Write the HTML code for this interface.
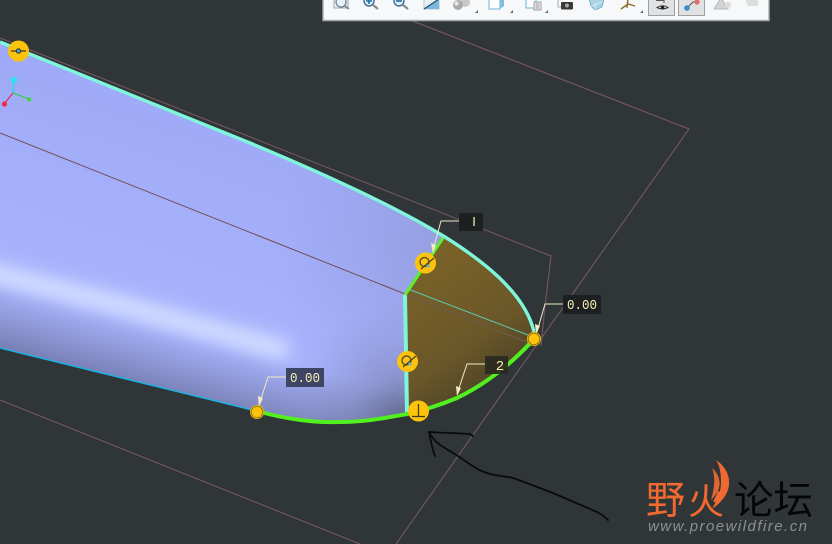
<!DOCTYPE html>
<html>
<head>
<meta charset="utf-8">
<style>
html,body{margin:0;padding:0;background:#303637;}
#p{position:relative;width:832px;height:544px;overflow:hidden;background:#303637;}
svg{position:absolute;left:0;top:0;}
.lb{font-family:"Liberation Mono","DejaVu Sans Mono",monospace;fill:#f6efb4;font-size:14px;}
</style>
</head>
<body>
<div id="p">
<svg width="832" height="544" viewBox="0 0 832 544">
<defs>
<linearGradient id="bg" gradientUnits="userSpaceOnUse" x1="170" y1="90" x2="90" y2="340">
<stop offset="0" stop-color="#9ea9f7"/>
<stop offset="0.45" stop-color="#a4affa"/>
<stop offset="1" stop-color="#a9b5fe"/>
</linearGradient>
<linearGradient id="shade" gradientUnits="userSpaceOnUse" x1="240" y1="305" x2="212" y2="408">
<stop offset="0" stop-color="#5f6690" stop-opacity="0"/>
<stop offset="0.4" stop-color="#5f6690" stop-opacity="0"/>
<stop offset="1" stop-color="#5f6690" stop-opacity="0.7"/>
</linearGradient>
<radialGradient id="corner" gradientUnits="userSpaceOnUse" cx="405" cy="425" r="125">
<stop offset="0" stop-color="#4c5270" stop-opacity="0.85"/>
<stop offset="0.4" stop-color="#6a7198" stop-opacity="0.42"/>
<stop offset="1" stop-color="#8a92c8" stop-opacity="0"/>
</radialGradient>
<radialGradient id="top" gradientUnits="userSpaceOnUse" cx="445" cy="255" r="170">
<stop offset="0" stop-color="#8a94c8" stop-opacity="0.55"/>
<stop offset="1" stop-color="#8a94d8" stop-opacity="0"/>
</radialGradient>
<linearGradient id="br" gradientUnits="userSpaceOnUse" x1="415" y1="250" x2="520" y2="400">
<stop offset="0" stop-color="#7c6428"/>
<stop offset="0.6" stop-color="#6a5628"/>
<stop offset="1" stop-color="#3e3a2a"/>
</linearGradient>
<filter id="b8" x="-20%" y="-80%" width="140%" height="260%"><feGaussianBlur stdDeviation="8"/></filter>
<clipPath id="surf"><path d="M0,42 L250,143 C310,168 390,203 445,237 L405,294 L407,414 C385,418 365,422 340,422 C315,423 285,419 257,411 L0,348 Z"/></clipPath>
</defs>

<!-- plane lines -->
<g fill="none" stroke="#7b5a66" stroke-width="1">
<path d="M410,20 L689,129 L396,544"/>
<path d="M0,400 L360,544"/>
<path d="M0,38 L551,256 L545,306 L541,346"/>
</g>

<!-- blue surface -->
<path d="M0,42 L250,143 C310,168 390,203 445,237 L405,294 L407,414 C385,418 365,422 340,422 C315,423 285,419 257,411 L0,348 Z" fill="url(#bg)"/>
<g clip-path="url(#surf)">
<rect x="200" y="60" width="260" height="380" fill="url(#top)"/>
<path d="M-20,270 L120,305 L280,349" stroke="#d2deff" stroke-width="20" stroke-linecap="round" fill="none" filter="url(#b8)"/>
<rect x="0" y="250" width="420" height="180" fill="url(#shade)"/>
<rect x="270" y="290" width="150" height="140" fill="url(#corner)"/>
</g>
<!-- brown patch -->
<path d="M445,237 C480,259 525,292 534,339 C515,360 490,382 457,398 C440,405 425,410 407,414 L405,294 Z" fill="url(#br)"/>

<!-- centre lines -->
<path d="M0,133 L405,294" stroke="#724c52" stroke-width="1" fill="none"/>
<path d="M405,294 L534,345" stroke="#6f5a50" stroke-width="1" fill="none"/>
<path d="M408,289 L528,335" stroke="#5fc4b0" stroke-width="1" fill="none"/>

<!-- edges -->
<path d="M0,42 L250,143 C310,168 390,203 445,237 C480,259 525,292 534,332" fill="none" stroke="#7ff5dc" stroke-width="3.4"/>
<path d="M405,295 L407,412" fill="none" stroke="#7ff5dc" stroke-width="4"/>
<path d="M0,348 L252,410" fill="none" stroke="#16b4e6" stroke-width="1.4"/>
<path d="M443,238 L425,265 L405,295" fill="none" stroke="#5af02a" stroke-width="3"/>
<path d="M257,411 C285,419 315,423 340,422 C365,422 385,418 407,414 C425,410 440,405 457,398 C490,382 515,360 534,339" fill="none" stroke="#52f01e" stroke-width="4"/>

<!-- triad -->
<path d="M13,93 L14,80" stroke="#20d8f0" stroke-width="1.4"/>
<path d="M13,93 L4,104" stroke="#e83040" stroke-width="1.2"/>
<path d="M13,93 L29,99" stroke="#30d040" stroke-width="1.2"/>
<circle cx="14" cy="80" r="3" fill="#25e5f5"/>
<circle cx="4.5" cy="104" r="2.6" fill="#ee2a48"/>
<circle cx="29" cy="99.5" r="2.1" fill="#38dc30"/>

<!-- leaders -->
<g fill="none" stroke="#f0ebc0" stroke-width="1">
<path d="M459,221 L441,221 L433,250"/>
<path d="M563,304 L545,304 L537,332"/>
<path d="M485,364 L467,364 L457,394"/>
<path d="M286,377 L268,377 L259,405"/>
</g>
<path d="M431,243 L436,245 L433,254 Z" fill="#f0ebc0"/>
<path d="M535,324 L540,326 L536,334 Z" fill="#f0ebc0"/>
<path d="M456,386 L461,388 L457,396 Z" fill="#f0ebc0"/>
<path d="M258,396 L263,398 L259,407 Z" fill="#f0ebc0"/>

<!-- labels -->
<rect x="459" y="213" width="24" height="18" fill="#1c2020"/>
<text x="474" y="226" style="font-family:'Liberation Sans',sans-serif;font-size:13px;fill:#f6efb4" text-anchor="middle">I</text>
<rect x="563" y="295" width="38" height="19" fill="#1c2020"/>
<text x="567" y="309" class="lb" textLength="30" lengthAdjust="spacingAndGlyphs">0.00</text>
<rect x="485" y="356" width="23" height="18" fill="#2a2820" fill-opacity="0.92"/>
<text x="500" y="370" class="lb" text-anchor="middle">2</text>
<rect x="286" y="368" width="38" height="19" fill="#3f4565"/>
<text x="290" y="382" class="lb" textLength="30" lengthAdjust="spacingAndGlyphs">0.00</text>

<!-- handles -->
<circle cx="18.5" cy="51" r="10.5" fill="#fdc30a"/>
<path d="M11,51 H26" stroke="#33332a" stroke-width="1.2"/>
<circle cx="18.5" cy="51" r="2.2" fill="#4fa0b0" stroke="#24333a" stroke-width="1"/>

<circle cx="425.5" cy="263" r="10.5" fill="#fdc30a"/>
<circle cx="424.5" cy="262" r="4.5" fill="none" stroke="#44402a" stroke-width="1.2"/>
<path d="M421,269 L434,258" stroke="#44402a" stroke-width="1.2"/>
<circle cx="428" cy="266" r="1.6" fill="#5fb8d8"/>

<circle cx="407.5" cy="361.5" r="10.5" fill="#fdc30a"/>
<circle cx="406.5" cy="360.5" r="4.5" fill="none" stroke="#44402a" stroke-width="1.2"/>
<path d="M403,367 L416,356" stroke="#44402a" stroke-width="1.2"/>
<circle cx="410" cy="364" r="1.6" fill="#5fb8d8"/>

<circle cx="418.5" cy="411" r="10.5" fill="#fdc30a"/>
<path d="M418.5,404 V416 M412,416.5 H425" stroke="#3a3820" stroke-width="1.2" fill="none"/>

<circle cx="534" cy="339" r="7" fill="#fdc30a"/>
<circle cx="534" cy="339" r="5.8" fill="none" stroke="#8c7420" stroke-width="1"/>
<circle cx="257" cy="412" r="7" fill="#fdc30a"/>
<circle cx="257" cy="412" r="5.8" fill="none" stroke="#8c7420" stroke-width="1"/>

<!-- hand-drawn arrow -->
<g fill="none" stroke="#0a0a0a" stroke-width="1.8" stroke-linecap="round" stroke-linejoin="round">
<path d="M473,436 L470,434 C457,433 443,433 429,432 C431,441 432,449 435,456"/>
<path d="M429,432 C432,438 436,442 440,445 L458,456 C468,463 477,470 487,473 C495,476 505,476 513,478 C527,483 540,488 553,493 L597,512 C601,514 605,517 608,520"/>
</g>

<!-- toolbar -->
<rect x="323" y="0" width="446" height="20.5" fill="#f6f8fa"/>
<path d="M323,0 V20.5 H769 V0" fill="none" stroke="#a8abae" stroke-width="1.4"/>

<path d="M334,0 V8 H348 V0" fill="#eef3f8" stroke="#9aa6b0" stroke-width="1"/>
<circle cx="341" cy="2" r="5" fill="#e8f1fa" stroke="#5f7f98" stroke-width="1.2"/>
<path d="M345,6 L349,9" stroke="#8a8a8a" stroke-width="2"/>
<circle cx="369" cy="1" r="5" fill="#ddeefa" stroke="#3f6e95" stroke-width="1.4"/>
<path d="M366,1 H372 M369,-2 V4" stroke="#1f6ea8" stroke-width="1.6"/>
<path d="M373,5 L378,9" stroke="#8a8a8a" stroke-width="2.2"/>
<circle cx="399" cy="1" r="5" fill="#ddeefa" stroke="#3f6e95" stroke-width="1.4"/>
<path d="M396,1 H402" stroke="#1f6ea8" stroke-width="1.6"/>
<path d="M403,5 L408,9" stroke="#8a8a8a" stroke-width="2.2"/>
<rect x="424" y="-1" width="15" height="10" fill="#e8f0f5" stroke="#b0bac2" stroke-width="0.8"/>
<path d="M424,9 L439,-1 V9 Z" fill="#7ab8da"/>
<path d="M424,9 L439,-1" stroke="#1c4e72" stroke-width="1.2"/>
<circle cx="465" cy="2" r="5" fill="#c8c8c8"/>
<circle cx="458" cy="5" r="5" fill="#aaaaaa"/>
<circle cx="456.5" cy="3.5" r="2.2" fill="#e6e6e6"/>
<path d="M475,13 h3 v-3 z M510,13 h3 v-3 z M545,13 h3 v-3 z M640,13 h3 v-3 z" fill="#666"/>
<rect x="489" y="-1" width="11" height="10" fill="#fbfdff" stroke="#6fb2d6" stroke-width="1"/>
<path d="M500,-1 L504,-3 V6 L500,9 Z" fill="#7fc0e0"/>
<rect x="526" y="-1" width="10" height="9" fill="#fbfdff" stroke="#6fb2d6" stroke-width="1"/>
<rect x="534" y="2" width="7" height="8" fill="#f2f2f2" stroke="#888" stroke-width="0.8"/>
<path d="M535.5,4 h4 M535.5,6 h4 M535.5,8 h4" stroke="#777" stroke-width="0.7"/>
<path d="M558,0 V7 H561" fill="none" stroke="#999" stroke-width="0.8"/>
<rect x="561" y="2" width="12" height="7.5" rx="1" fill="#3a3a3a"/>
<circle cx="567" cy="5.5" r="2.5" fill="#a8a8a8" stroke="#222" stroke-width="0.7"/>
<path d="M589,-1 L604,-1 L602,7 L595,10 L591,6 Z" fill="#a9d4e4" stroke="#6aa8c4" stroke-width="0.8"/>
<path d="M591,6 L602,2 M595,10 L596,3" stroke="#d8eef6" stroke-width="0.8"/>
<path d="M628,-2 L627,8 M621,9 L628,4 L635,6" fill="none" stroke="#8a6a24" stroke-width="1.4"/>
<rect x="648.5" y="-2" width="26" height="17.5" fill="#e0e1e3" stroke="#9da0a2" stroke-width="1"/>
<rect x="678.5" y="-2" width="26" height="17.5" fill="#e0e1e3" stroke="#9da0a2" stroke-width="1"/>
<path d="M656,0.5 H664 M664,-1 V3" stroke="#555" stroke-width="1" fill="none"/>
<path d="M657,7.5 Q662.5,4 668,7.5 Q662.5,10.5 657,7.5 Z" fill="#eee" stroke="#333" stroke-width="1"/>
<circle cx="662.5" cy="7.5" r="1.8" fill="#222"/>
<path d="M687,8 L693,2 L697,2" stroke="#555" stroke-width="1" fill="none"/>
<circle cx="687" cy="8" r="2.8" fill="#3a8cc0"/>
<circle cx="697" cy="2" r="2.6" fill="#e56a6a"/>
<path d="M714,9 L721,-2 L728,9 Z" fill="#d2d4d5" stroke="#b4b6b8" stroke-width="1"/>
<circle cx="728" cy="5" r="3" fill="#dcdcdc"/>
<path d="M745,-1 H758 V6 H748 Z" fill="#dcdddd"/>

<!-- watermark -->
<path d="M716,460 C725,466 730,475 729,485 C728,494 722,502 712,509 C717,500 721,492 721,482 C721,474 720,466 716,460 Z" fill="#ef6a32"/>
<path d="M712,468 C718,473 721,481 719,488 C718,492 715,496 711,500 C714,490 716,478 712,468 Z" fill="#e0652f"/>
<text x="646" y="514" font-family="'Noto Sans CJK SC','WenQuanYi Zen Hei',sans-serif" font-size="39" fill="#f26a30">野</text>
<text x="688" y="514" font-family="'Noto Sans CJK SC','WenQuanYi Zen Hei',sans-serif" font-size="36" fill="#f26a30">火</text>
<text x="734" y="514" font-family="'Noto Sans CJK SC','WenQuanYi Zen Hei',sans-serif" font-size="39" fill="#060606" textLength="79" lengthAdjust="spacingAndGlyphs">论坛</text>
<text x="648" y="531" font-family="'Liberation Sans',sans-serif" font-style="italic" font-size="15" fill="#8c9092" textLength="159">www.proewildfire.cn</text>
</svg>
</div>
</body>
</html>
